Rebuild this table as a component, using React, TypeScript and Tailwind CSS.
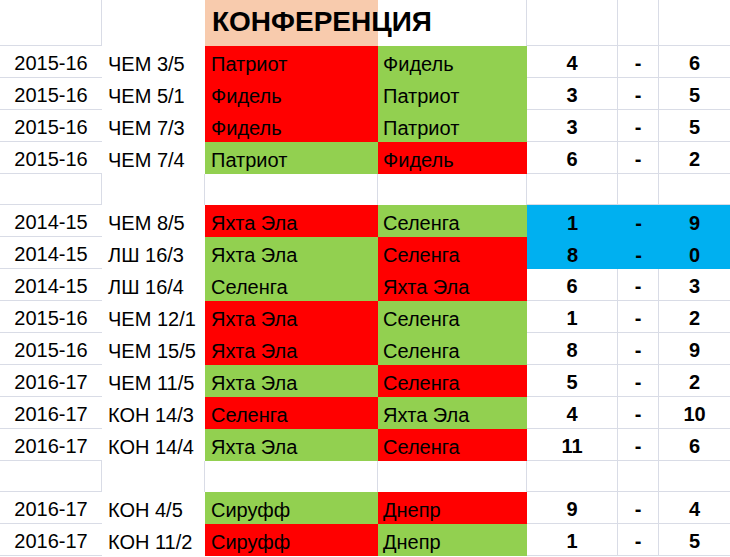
import React from "react";

type Fill = "r" | "g";

interface Match {
  season: string;
  code: string;
  home: string;
  homeFill: Fill;
  away: string;
  awayFill: Fill;
  a: string;
  b: string;
  blue?: boolean;
}

type Row = Match | null;

const rows: Row[] = [
  { season: "2015-16", code: "ЧЕМ 3/5", home: "Патриот", homeFill: "r", away: "Фидель", awayFill: "g", a: "4", b: "6" },
  { season: "2015-16", code: "ЧЕМ 5/1", home: "Фидель", homeFill: "r", away: "Патриот", awayFill: "g", a: "3", b: "5" },
  { season: "2015-16", code: "ЧЕМ 7/3", home: "Фидель", homeFill: "r", away: "Патриот", awayFill: "g", a: "3", b: "5" },
  { season: "2015-16", code: "ЧЕМ 7/4", home: "Патриот", homeFill: "g", away: "Фидель", awayFill: "r", a: "6", b: "2" },
  null,
  { season: "2014-15", code: "ЧЕМ 8/5", home: "Яхта Эла", homeFill: "r", away: "Селенга", awayFill: "g", a: "1", b: "9", blue: true },
  { season: "2014-15", code: "ЛШ 16/3", home: "Яхта Эла", homeFill: "g", away: "Селенга", awayFill: "r", a: "8", b: "0", blue: true },
  { season: "2014-15", code: "ЛШ 16/4", home: "Селенга", homeFill: "g", away: "Яхта Эла", awayFill: "r", a: "6", b: "3" },
  { season: "2015-16", code: "ЧЕМ 12/1", home: "Яхта Эла", homeFill: "r", away: "Селенга", awayFill: "g", a: "1", b: "2" },
  { season: "2015-16", code: "ЧЕМ 15/5", home: "Яхта Эла", homeFill: "r", away: "Селенга", awayFill: "g", a: "8", b: "9" },
  { season: "2016-17", code: "ЧЕМ 11/5", home: "Яхта Эла", homeFill: "g", away: "Селенга", awayFill: "r", a: "5", b: "2" },
  { season: "2016-17", code: "КОН 14/3", home: "Селенга", homeFill: "r", away: "Яхта Эла", awayFill: "g", a: "4", b: "10" },
  { season: "2016-17", code: "КОН 14/4", home: "Яхта Эла", homeFill: "g", away: "Селенга", awayFill: "r", a: "11", b: "6" },
  null,
  { season: "2016-17", code: "КОН 4/5", home: "Сируфф", homeFill: "g", away: "Днепр", awayFill: "r", a: "9", b: "4" },
  { season: "2016-17", code: "КОН 11/2", home: "Сируфф", homeFill: "r", away: "Днепр", awayFill: "g", a: "1", b: "5" },
];

const fillClass = (f: Fill) => (f === "r" ? "bg-[#ff0000]" : "bg-[#92d050]");

// gridline colour of the sheet
const grid = "border-[#d9dce6]";

const App: React.FC = () => {
  return (
    <div
      className="w-[730px] h-[557px] bg-white overflow-hidden text-black text-[20px]"
      style={{ fontFamily: '"Liberation Sans", Arial, sans-serif' }}
    >
      <div className="grid grid-cols-[102px_103px_173px_149px_91px_41px_71px]">
        {/* HEADER ROW */}
        <div className={`h-[46px] border-r border-b ${grid}`} />
        <div className="h-[46px] bg-white" />
        <div className="h-[46px] bg-[#f8cbad] relative">
          <span className="absolute left-[7px] top-[5px] text-[28px] font-bold whitespace-nowrap leading-[34px]">
            КОНФЕРЕНЦИЯ
          </span>
        </div>
        <div className={`h-[46px] border-r ${grid}`} />
        <div className={`h-[46px] border-r border-b ${grid}`} />
        <div className={`h-[46px] border-r border-b ${grid}`} />
        <div className={`h-[46px] border-b ${grid}`} />

        {rows.map((row, i) =>
          row === null ? (
            <React.Fragment key={i}>
              <div className={`h-[31px] border-r border-b ${grid}`} />
              <div className={`h-[31px] border-r ${grid}`} />
              <div className={`h-[31px] border-r ${grid}`} />
              <div className={`h-[31px] border-r ${grid}`} />
              <div className={`h-[31px] border-r border-b ${grid}`} />
              <div className={`h-[31px] border-r border-b ${grid}`} />
              <div className={`h-[31px] border-b ${grid}`} />
            </React.Fragment>
          ) : (
            <React.Fragment key={i}>
              <div className={`h-[32px] flex items-center justify-center pt-[3px] border-b ${grid}`}>
                {row.season}
              </div>
              <div className="h-[32px] flex items-center pl-[6px] pt-[3px] bg-white whitespace-nowrap">
                {row.code}
              </div>
              <div className={`h-[32px] flex items-center pl-[6px] pt-[3px] ${fillClass(row.homeFill)}`}>
                {row.home}
              </div>
              <div className={`h-[32px] flex items-center pl-[5px] pt-[3px] ${fillClass(row.awayFill)}`}>
                {row.away}
              </div>
              {row.blue ? (
                <>
                  <div className="h-[32px] flex items-center justify-center pt-[3px] font-bold bg-[#00b0f0]">{row.a}</div>
                  <div className="h-[32px] flex items-center justify-center pt-[3px] font-bold bg-[#00b0f0]">-</div>
                  <div className="h-[32px] flex items-center justify-center pt-[3px] font-bold bg-[#00b0f0]">{row.b}</div>
                </>
              ) : (
                <>
                  <div className={`h-[32px] flex items-center justify-center pt-[3px] font-bold border-r border-b ${grid}`}>{row.a}</div>
                  <div className={`h-[32px] flex items-center justify-center pt-[3px] font-bold border-r border-b ${grid}`}>-</div>
                  <div className={`h-[32px] flex items-center justify-center pt-[3px] font-bold border-b ${grid}`}>{row.b}</div>
                </>
              )}
            </React.Fragment>
          )
        )}
      </div>
    </div>
  );
};

export default App;
